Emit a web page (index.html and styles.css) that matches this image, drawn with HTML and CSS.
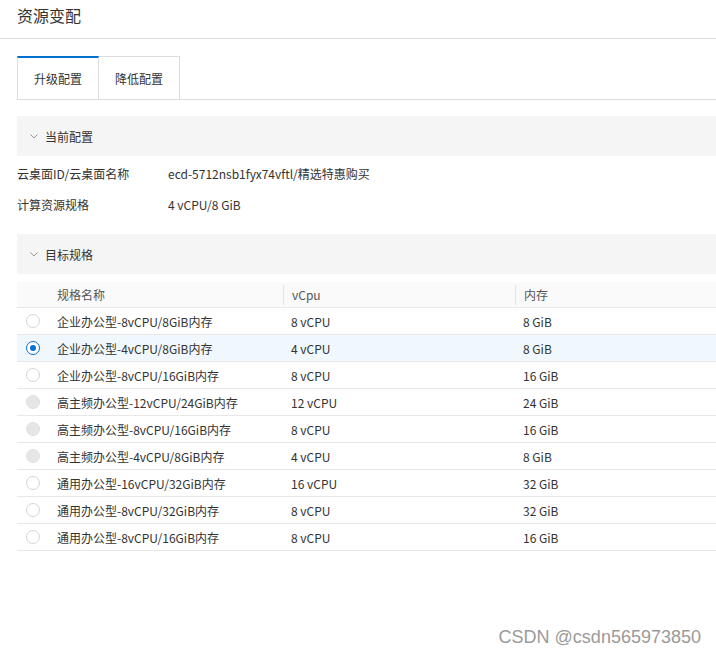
FILE: index.html
```html
<!DOCTYPE html>
<html lang="zh-CN">
<head>
<meta charset="utf-8">
<title>资源变配</title>
<link rel="stylesheet" href="styles.css">
</head>
<body>
<div class="page">
  <div class="title-bar"><span class="title">资源变配</span></div>
  <div class="content">
    <div class="tabs">
      <div class="tab active">升级配置</div>
      <div class="tab">降低配置</div>
    </div>

    <div class="section-head">
      <svg class="chev" width="8" height="5" viewBox="0 0 8 5"><polyline points="0.5,0.5 4,4 7.5,0.5" fill="none" stroke="#999" stroke-width="1"/></svg>
      <span>当前配置</span>
    </div>
    <div class="info">
      <div class="info-row"><span class="info-label">云桌面ID/云桌面名称</span><span class="info-value">ecd-5712nsb1fyx74vftl/精选特惠购买</span></div>
      <div class="info-row"><span class="info-label">计算资源规格</span><span class="info-value">4 vCPU/8 GiB</span></div>
    </div>

    <div class="section-head target">
      <svg class="chev" width="8" height="5" viewBox="0 0 8 5"><polyline points="0.5,0.5 4,4 7.5,0.5" fill="none" stroke="#999" stroke-width="1"/></svg>
      <span>目标规格</span>
    </div>

    <div class="table">
      <div class="trow thead">
        <div class="cell radio-cell"></div>
        <div class="cell">规格名称</div>
        <div class="cell sep">vCpu</div>
        <div class="cell sep">内存</div>
      </div>
      <div class="trow"><div class="cell radio-cell"><span class="radio"></span></div><div class="cell">企业办公型-8vCPU/8GiB内存</div><div class="cell">8 vCPU</div><div class="cell">8 GiB</div></div>
      <div class="trow selected"><div class="cell radio-cell"><span class="radio checked"></span></div><div class="cell">企业办公型-4vCPU/8GiB内存</div><div class="cell">4 vCPU</div><div class="cell">8 GiB</div></div>
      <div class="trow"><div class="cell radio-cell"><span class="radio"></span></div><div class="cell">企业办公型-8vCPU/16GiB内存</div><div class="cell">8 vCPU</div><div class="cell">16 GiB</div></div>
      <div class="trow"><div class="cell radio-cell"><span class="radio disabled"></span></div><div class="cell">高主频办公型-12vCPU/24GiB内存</div><div class="cell">12 vCPU</div><div class="cell">24 GiB</div></div>
      <div class="trow"><div class="cell radio-cell"><span class="radio disabled"></span></div><div class="cell">高主频办公型-8vCPU/16GiB内存</div><div class="cell">8 vCPU</div><div class="cell">16 GiB</div></div>
      <div class="trow"><div class="cell radio-cell"><span class="radio disabled"></span></div><div class="cell">高主频办公型-4vCPU/8GiB内存</div><div class="cell">4 vCPU</div><div class="cell">8 GiB</div></div>
      <div class="trow"><div class="cell radio-cell"><span class="radio"></span></div><div class="cell">通用办公型-16vCPU/32GiB内存</div><div class="cell">16 vCPU</div><div class="cell">32 GiB</div></div>
      <div class="trow"><div class="cell radio-cell"><span class="radio"></span></div><div class="cell">通用办公型-8vCPU/32GiB内存</div><div class="cell">8 vCPU</div><div class="cell">32 GiB</div></div>
      <div class="trow"><div class="cell radio-cell"><span class="radio"></span></div><div class="cell">通用办公型-8vCPU/16GiB内存</div><div class="cell">8 vCPU</div><div class="cell">16 GiB</div></div>
    </div>
  </div>
  <div class="watermark">CSDN @csdn565973850</div>
</div>
</body>
</html>
```

FILE: styles.css
```css
html, body {
  margin: 0;
  padding: 0;
  background: #fff;
}
body {
  font-family: "Noto Sans CJK SC", "Noto Sans", sans-serif;
  font-size: 12px;
  color: #333;
}
.page {
  position: relative;
  width: 716px;
  height: 656px;
  overflow: hidden;
}
.title-bar {
  height: 39px;
  border-bottom: 1px solid #dcdcdc;
  display: flex;
  align-items: center;
  padding-left: 17px;
  padding-bottom: 9px;
  box-sizing: border-box;
}
.title {
  font-size: 16px;
  line-height: 20px;
  color: #333;
}
.content {
  padding-left: 17px;
}
.tabs {
  margin-top: 17px;
  display: flex;
  border-bottom: 1px solid #dcdcdc;
  height: 44px;
  box-sizing: border-box;
}
.tab {
  width: 81px;
  height: 43px;
  box-sizing: border-box;
  border: 1px solid #dcdcdc;
  border-bottom: none;
  border-left: none;
  display: flex;
  align-items: center;
  justify-content: center;
  padding-top: 1px;
  font-size: 12px;
  color: #333;
}
.tab.active {
  width: 82px;
  border-left: 1px solid #dcdcdc;
  border-top: 2px solid #0070cc;
  padding-top: 0;
}
.section-head {
  margin-top: 16px;
  height: 40px;
  background: #f5f5f5;
  display: flex;
  align-items: center;
  padding-left: 13px;
  color: #333;
  font-size: 12px;
}
.section-head .chev {
  margin-right: 7px;
}
.section-head.target {
  margin-top: 14px;
}
.info {
  padding-top: 2px;
}
.info-row {
  height: 31px;
  display: flex;
  align-items: center;
}
.info-label {
  width: 151px;
}
.table {
  margin-top: 8px;
}
.trow {
  display: grid;
  grid-template-columns: 32px 234px 232px 1fr;
  height: 27px;
  border-bottom: 1px solid #e8e8e8;
  box-sizing: border-box;
}
.trow.thead {
  height: 26px;
  background: #fafafa;
  color: #555;
}
.trow.selected {
  background: #f1f8fd;
}
.cell {
  display: flex;
  align-items: center;
  padding-left: 8px;
  white-space: nowrap;
}
.cell.radio-cell {
  padding-left: 9px;
}
.cell.sep {
  border-left: 1px solid #e5e5e5;
  height: 20px;
  align-self: center;
}
.radio {
  width: 14px;
  height: 14px;
  border-radius: 50%;
  border: 1px solid #d4d4d4;
  box-sizing: border-box;
  background: #fff;
  position: relative;
}
.radio.disabled {
  background: #e6e6e6;
  border-color: #e0e0e0;
}
.radio.checked {
  border: 1.5px solid #0a6fd1;
}
.radio.checked::after {
  content: "";
  position: absolute;
  left: 2.5px;
  top: 2.5px;
  width: 6px;
  height: 6px;
  border-radius: 50%;
  background: #0a6fd1;
}
.watermark {
  position: absolute;
  right: 15px;
  bottom: 8px;
  font-family: "Liberation Sans", Arial, sans-serif;
  font-size: 18px;
  color: #9a9a9a;
  text-shadow: 0 0 1px #fff;
}
```
